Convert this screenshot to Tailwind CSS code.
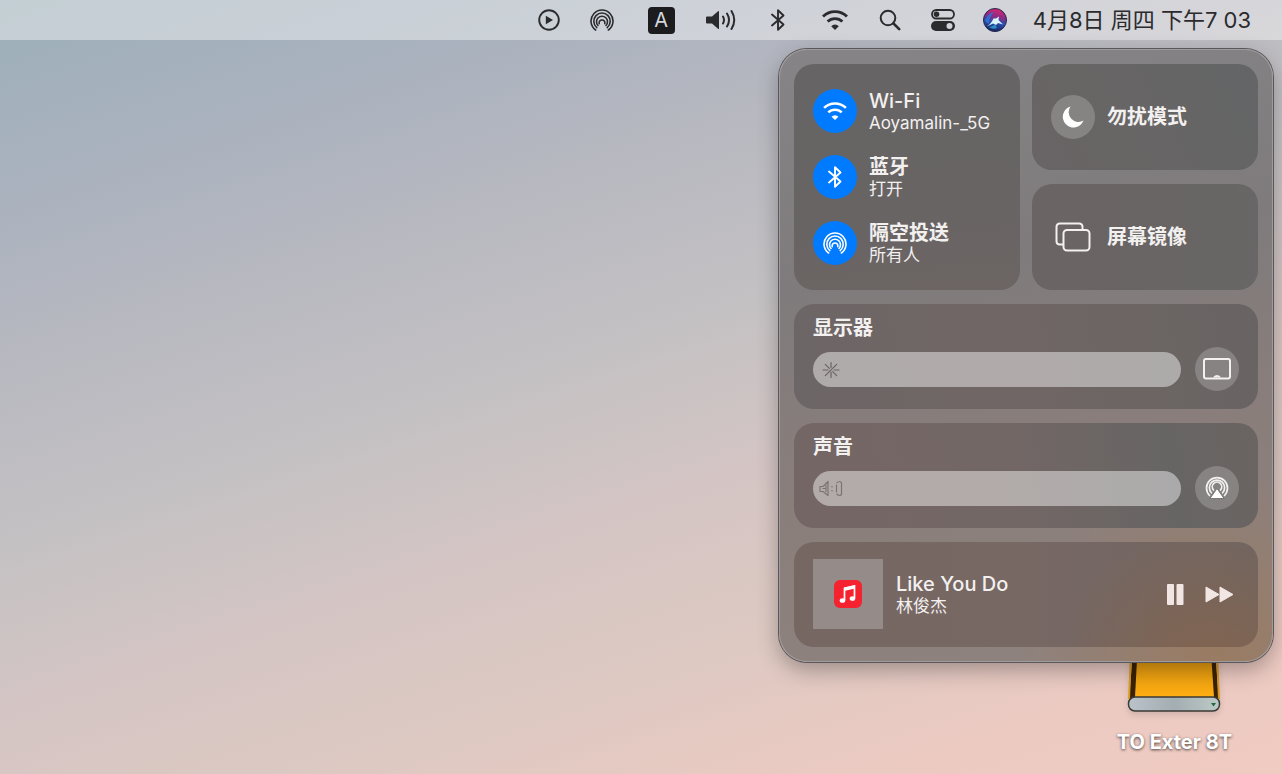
<!DOCTYPE html>
<html lang="zh-CN">

<head>
    <meta charset="UTF-8">
    <meta name="viewport" content="width=device-width, initial-scale=1.0">
    <title>控制中心</title>
    <script src="https://cdn.jsdelivr.net/npm/@tailwindcss/browser@4"></script>
</head>

<body class="relative flex min-h-screen flex-col overflow-x-hidden bg-[linear-gradient(162deg,#9cafb8_0%,#aab2be_17%,#b7b8c0_30%,#c4c1c3_46%,#d4c5c4_60%,#dec9c2_75%,#ebcac2_88%,#f0cbc2_100%)] font-['Inter','Noto_Sans_CJK_SC',sans-serif]">

    <!-- 公用图标 -->
    <svg class="hidden" aria-hidden="true">
        <symbol id="icon-wifi" viewBox="0 0 28 22">
            <path d="M2 7.6a17 17 0 0 1 24 0M6.6 12.6a10.500 10.500 0 0 1 14.800 0" fill="none" stroke="currentColor" stroke-width="2.800" />
            <path d="M14 21l-3.800-3.800a5.200 5.200 0 0 1 7.600 0z" fill="currentColor" />
        </symbol>
        <symbol id="icon-bluetooth" viewBox="0 0 16 24">
            <path d="M2 6.5l11.500 10L8 21.8V2.2l5.500 5.300L2 17.500" fill="none" stroke="currentColor" stroke-width="1.900" stroke-linejoin="round" stroke-linecap="round" />
        </symbol>
        <symbol id="icon-airdrop" viewBox="0 0 24 24">
            <g fill="none" stroke="currentColor" stroke-width="1.600" stroke-linecap="round">
                <path d="M5.600 22a11 11 0 1 1 12.800 0" />
                <path d="M6.800 19.600a8.200 8.200 0 1 1 10.400 0" />
                <path d="M8 17.500a5.500 5.500 0 1 1 8 0" />
                <path d="M9.200 15.600a2.900 2.900 0 1 1 5.600 0" />
            </g>
        </symbol>
        <symbol id="icon-speaker" viewBox="0 0 31 22">
            <path d="M1 7.500h5L12 2.200q1-.8 1 .4v16.800q0 1.200-1 .4L6 14.500H1q-1 0-1-1v-5q0-1 1-1z" fill="currentColor" />
            <path d="M17 7.500q2 3.500 0 7M21 4.500q4 6.500 0 13M25.500 2q5.500 9 0 18" fill="none" stroke="currentColor" stroke-width="2" stroke-linecap="round" />
        </symbol>
    </svg>

    <!-- 菜单栏 -->
    <header class="flex h-10 items-center justify-end gap-[26px] bg-white/40 pr-[31px] text-[#2b2b2e]">
        <button type="button" aria-label="正在播放" class="flex w-[26px] justify-center">
            <svg class="size-[22px]" viewBox="0 0 22 22">
                <circle cx="11" cy="11" r="9.800" fill="none" stroke="currentColor" stroke-width="1.900" />
                <path d="M7.800 6.800v8.400l7.200-4.200z" fill="currentColor" />
            </svg>
        </button>
        <button type="button" aria-label="隔空投送" class="flex w-7 justify-center">
            <svg class="size-6"><use href="#icon-airdrop" /></svg>
        </button>
        <button type="button" aria-label="输入法" class="flex w-[39px] justify-center">
            <span class="flex size-[27px] items-center justify-center rounded bg-[#1c1c1e] text-xl text-[#d6d8de]">A</span>
        </button>
        <button type="button" aria-label="声音" class="flex w-[30px] justify-center">
            <svg class="h-[22px] w-[31px] shrink-0"><use href="#icon-speaker" /></svg>
        </button>
        <button type="button" aria-label="蓝牙" class="flex w-[30px] justify-center">
            <svg class="h-6 w-4"><use href="#icon-bluetooth" /></svg>
        </button>
        <button type="button" aria-label="Wi-Fi" class="flex w-8 justify-center">
            <svg class="h-[22px] w-7"><use href="#icon-wifi" /></svg>
        </button>
        <button type="button" aria-label="搜索" class="flex w-[26px] justify-center">
            <svg class="size-[22px]" viewBox="0 0 22 22" fill="none" stroke="currentColor" stroke-linecap="round">
                <circle cx="9" cy="9" r="7.300" stroke-width="2" />
                <path d="M14.500 14.500l5.700 5.700" stroke-width="2.600" />
            </svg>
        </button>
        <button type="button" aria-label="控制中心" class="flex w-7 justify-center">
            <svg class="h-[22px] w-6" viewBox="0 0 24 22">
                <rect x="1" y="1" width="22" height="8.500" rx="4.250" fill="none" stroke="currentColor" stroke-width="1.800" />
                <circle cx="5.500" cy="5.250" r="2.800" fill="currentColor" />
                <rect x="0" y="12" width="24" height="10" rx="5" fill="currentColor" />
                <circle cx="18.500" cy="17" r="3" fill="#d2d3da" />
            </svg>
        </button>
        <button type="button" aria-label="Siri" class="flex w-6 justify-center">
            <svg class="size-6" viewBox="0 0 24 24">
                <defs>
                    <linearGradient id="siri" x1="0.600" y1="0" x2="0.400" y2="1">
                        <stop offset="0" stop-color="#d9256f" />
                        <stop offset="0.350" stop-color="#8c2a84" />
                        <stop offset="0.600" stop-color="#2b4fae" />
                        <stop offset="1" stop-color="#15245c" />
                    </linearGradient>
                </defs>
                <circle cx="12" cy="12" r="11.500" fill="url(#siri)" stroke="#23274e" />
                <path d="M2 13q3-8 9-9-5 5-5 12z" fill="#2f6fd0" />
                <path d="M4 18.500Q8 16 10.500 10.500l2.500 0 3-2-.5 3.500 4.500 4.500-5-1.500-2 2-3-1.500z" fill="#d9f5fb" />
                <path d="M6 19q5-1 6-3l2 4q-4 2-8-1z" fill="#2a8fc4" />
            </svg>
        </button>
        <time class="text-[22px] leading-6 whitespace-nowrap">4月8日 周四 下午7 03</time>
    </header>

    <!-- 桌面 -->
    <main class="flex flex-1 flex-col items-end justify-end pr-[50px] pb-5">
        <figure class="flex flex-col items-center gap-[17px]">
            <svg class="h-[92px] w-[94px] drop-shadow-md" viewBox="0 0 94 92">
                <defs>
                    <linearGradient id="disk" x1="0" y1="0" x2="0" y2="1">
                        <stop offset="0.400" stop-color="#dd960e" />
                        <stop offset="1" stop-color="#ffae12" />
                    </linearGradient>
                    <linearGradient id="disk-front" x1="0" y1="0" x2="1" y2="0">
                        <stop offset="0" stop-color="#b9c3c9" />
                        <stop offset="0.500" stop-color="#a3adb2" />
                        <stop offset="1" stop-color="#bccac6" />
                    </linearGradient>
                </defs>
                <path d="M8 2h78l6 78H2z" fill="#3a2204" />
                <path d="M4 34L2 78M90 34l2 44" stroke="#d99a20" stroke-width="2" />
                <path d="M12 2h70l5 74H8z" fill="url(#disk)" />
                <rect x="1.500" y="76" width="91" height="14" rx="6.500" fill="url(#disk-front)" stroke="#3c3a36" stroke-width="1.500" />
                <path d="M84 82h5l-2.500 3.500z" fill="#1f6a3c" />
            </svg>
            <figcaption class="text-[20px] leading-6 font-bold text-white [text-shadow:0_1px_3px_rgb(0_0_0/0.7)]">TO Exter 8T</figcaption>
        </figure>
    </main>

    <!-- 控制中心面板 -->
    <section aria-label="控制中心" class="absolute top-[49px] right-[9px] flex w-[494px] flex-col gap-[14px] rounded-[28px] bg-[radial-gradient(circle_at_88%_100%,#9a7b62_0%,transparent_26%),linear-gradient(170deg,#868487_0%,#7f7b7c_35%,#8a7e7b_65%,#8f837f_100%)] p-[15px] text-[#f3f0f0] shadow-[0_0_0_1px_#5a575a,inset_0_0_0_1px_#a09c9e,0_8px_22px_rgb(0_0_0/0.3)]">

        <div class="grid grid-cols-2 gap-x-3 gap-y-[14px]">
            <!-- 网络 -->
            <ul class="row-span-2 flex flex-col gap-[22px] rounded-[20px] bg-[linear-gradient(175deg,#666465_0%,#686464_60%,#6c6564_100%)] px-[19px] py-[25px]">
                <li class="flex gap-3">
                    <button type="button" aria-label="Wi-Fi" class="flex size-11 items-center justify-center rounded-full bg-[#007aff] text-white">
                        <svg class="h-5 w-[26px]"><use href="#icon-wifi" /></svg>
                    </button>
                    <div>
                        <h2 class="text-[20px] leading-6 font-medium">Wi-Fi</h2>
                        <p class="text-[17px] leading-5">Aoyamalin-_5G</p>
                    </div>
                </li>
                <li class="flex gap-3">
                    <button type="button" aria-label="蓝牙" class="flex size-11 items-center justify-center rounded-full bg-[#007aff] text-white">
                        <svg class="h-6 w-4"><use href="#icon-bluetooth" /></svg>
                    </button>
                    <div>
                        <h2 class="text-[20px] leading-6 font-semibold">蓝牙</h2>
                        <p class="text-[17px] leading-5">打开</p>
                    </div>
                </li>
                <li class="flex gap-3">
                    <button type="button" aria-label="隔空投送" class="flex size-11 items-center justify-center rounded-full bg-[#007aff] text-white">
                        <svg class="size-6"><use href="#icon-airdrop" /></svg>
                    </button>
                    <div>
                        <h2 class="text-[20px] leading-6 font-semibold">隔空投送</h2>
                        <p class="text-[17px] leading-5">所有人</p>
                    </div>
                </li>
            </ul>

            <button type="button" class="flex items-center gap-3 rounded-[20px] bg-[linear-gradient(60deg,#696465_0%,#676565_50%,#636566_100%)] px-[19px] py-[31px]">
                <span class="flex size-11 items-center justify-center rounded-full bg-white/20">
                    <svg class="size-6" viewBox="0 0 24 24">
                        <path d="M9.500 1.500A10.700 10.700 0 1 0 22.500 15.600 9.800 9.800 0 0 1 9.500 1.500z" fill="#fff" />
                    </svg>
                </span>
                <span class="text-[20px] leading-6 font-semibold">勿扰模式</span>
            </button>

            <button type="button" class="flex items-center gap-3 rounded-[20px] bg-[linear-gradient(90deg,#6b6464_0%,#686564_60%,#686666_100%)] px-[19px] py-[31px]">
                <span class="flex size-11 items-center justify-center">
                    <svg class="h-[30px] w-9" viewBox="0 0 36 30" fill="none" stroke="currentColor" stroke-width="2">
                        <path d="M8 22.500H5q-3.500 0-3.500-3.500V5q0-3.500 3.500-3.500h19q3.500 0 3.500 3.500v2" />
                        <rect x="8.500" y="8" width="26" height="20.500" rx="3.500" />
                    </svg>
                </span>
                <span class="text-[20px] leading-6 font-semibold">屏幕镜像</span>
            </button>
        </div>

        <!-- 显示器 -->
        <div class="flex flex-col gap-[7px] rounded-[20px] bg-[linear-gradient(80deg,#6d6666_0%,#706665_45%,#686463_100%)] px-[19px] pt-3 pb-[18px]">
            <label for="brightness" class="text-[20px] leading-6 font-semibold">显示器</label>
            <div class="flex items-center gap-[14px]">
                <div class="relative flex flex-1">
                    <input type="range" id="brightness" min="0" max="100" value="100"
                        class="h-[35px] w-full appearance-none rounded-full bg-white/45 [&::-webkit-slider-thumb]:size-[35px] [&::-webkit-slider-thumb]:appearance-none">
                    <svg class="pointer-events-none absolute top-[9px] left-[9px] size-[18px] text-[#6a6463]" viewBox="0 0 18 18" fill="none" stroke="currentColor" stroke-width="1.200" stroke-linecap="round">
                        <path d="M9 1.500v5M9 11v5.500M1 9h5M12 9h5M3.300 3.300l4 4M10.700 10.700l4 4M3.300 14.700l8-8M11.900 6.100l2.800-2.800" />
                    </svg>
                </div>
                <button type="button" aria-label="显示器选项" class="flex size-11 items-center justify-center rounded-full bg-white/20">
                    <svg class="h-[22px] w-7" viewBox="0 0 28 22">
                        <rect x="1" y="1" width="26" height="19.500" rx="2" fill="none" stroke="currentColor" stroke-width="2" />
                        <path d="M10 19.500q1-2.500 4-2.500t4 2.500z" fill="currentColor" />
                    </svg>
                </button>
            </div>
        </div>

        <!-- 声音 -->
        <div class="flex flex-col gap-[7px] rounded-[20px] bg-[linear-gradient(80deg,#746664_0%,#736765_45%,#676564_80%,#6a6462_100%)] px-[19px] pt-3 pb-[18px]">
            <label for="volume" class="text-[20px] leading-6 font-semibold">声音</label>
            <div class="flex items-center gap-[14px]">
                <div class="relative flex flex-1">
                    <input type="range" id="volume" min="0" max="100" value="100"
                        class="h-[35px] w-full appearance-none rounded-full bg-white/45 [&::-webkit-slider-thumb]:size-[35px] [&::-webkit-slider-thumb]:appearance-none">
                    <svg class="pointer-events-none absolute top-[9px] left-[6px] h-[17px] w-6 text-[#7c7473]" viewBox="0 0 24 17" fill="none" stroke="currentColor" stroke-width="1.200" stroke-linejoin="round">
                        <path d="M1 6.500h3l5-5v14l-5-4H1zM3.500 8.500h3M7 5v7" />
                        <path d="M13 6v1.500M13 10v1.500M17.500 4.500v8M17.500 3q4-3 5 0v11q-1 3-5 0" />
                    </svg>
                </div>
                <button type="button" aria-label="隔空播放" class="flex size-11 items-center justify-center rounded-full bg-white/20">
                    <svg class="size-6" viewBox="0 0 24 24">
                        <g fill="none" stroke="currentColor" stroke-width="1.700" stroke-linecap="round">
                            <path d="M4.500 19.500a10.500 10.500 0 1 1 15 0" />
                            <path d="M6.400 16.800a7.600 7.600 0 1 1 11.200 0" />
                            <path d="M8.500 14a4.700 4.700 0 1 1 7 0" />
                        </g>
                        <path d="M12 12.500l7 10H5z" fill="#fff" stroke="#6a6867" stroke-width="0.800" />
                    </svg>
                </button>
            </div>
        </div>

        <!-- 正在播放 -->
        <div class="flex items-center gap-[13px] rounded-[20px] bg-[radial-gradient(circle_at_90%_130%,#84644e_0%,transparent_35%),linear-gradient(90deg,#766763_0%,#776864_50%,#706561_100%)] pt-[17px] pr-6 pb-[18px] pl-[19px]">
            <div class="flex size-[70px] items-center justify-center bg-[#958b89]">
                <svg class="size-7" viewBox="0 0 28 28">
                    <rect width="28" height="28" rx="6" fill="#f5222f" />
                    <path d="M10.500 20V8.500l10-2.500v12" fill="none" stroke="#fff" stroke-width="1.700" />
                    <path d="M10 7.500l11-2.500v3.500l-11 2.500z" fill="#fff" />
                    <ellipse cx="8.500" cy="20.500" rx="2.800" ry="2.300" fill="#fff" />
                    <ellipse cx="18.500" cy="18.500" rx="2.800" ry="2.300" fill="#fff" />
                </svg>
            </div>
            <div class="flex-1">
                <h2 class="text-[20px] leading-6 font-medium">Like You Do</h2>
                <p class="text-[17px] leading-5">林俊杰</p>
            </div>
            <div class="flex items-center gap-[21px] text-[#f1e6e3]">
                <button type="button" aria-label="暂停">
                    <svg class="h-[21px] w-[17px]" viewBox="0 0 17 21" fill="currentColor">
                        <rect width="7" height="21" rx="1" />
                        <rect x="9.500" width="7" height="21" rx="1" />
                    </svg>
                </button>
                <button type="button" aria-label="下一首">
                    <svg class="h-[17px] w-[29px]" viewBox="0 0 29 17" fill="currentColor" stroke="currentColor" stroke-linejoin="round">
                        <path d="M1 1v15l13-7.500zM15 1v15l13-7.500z" />
                    </svg>
                </button>
            </div>
        </div>
    </section>
</body>

</html>
